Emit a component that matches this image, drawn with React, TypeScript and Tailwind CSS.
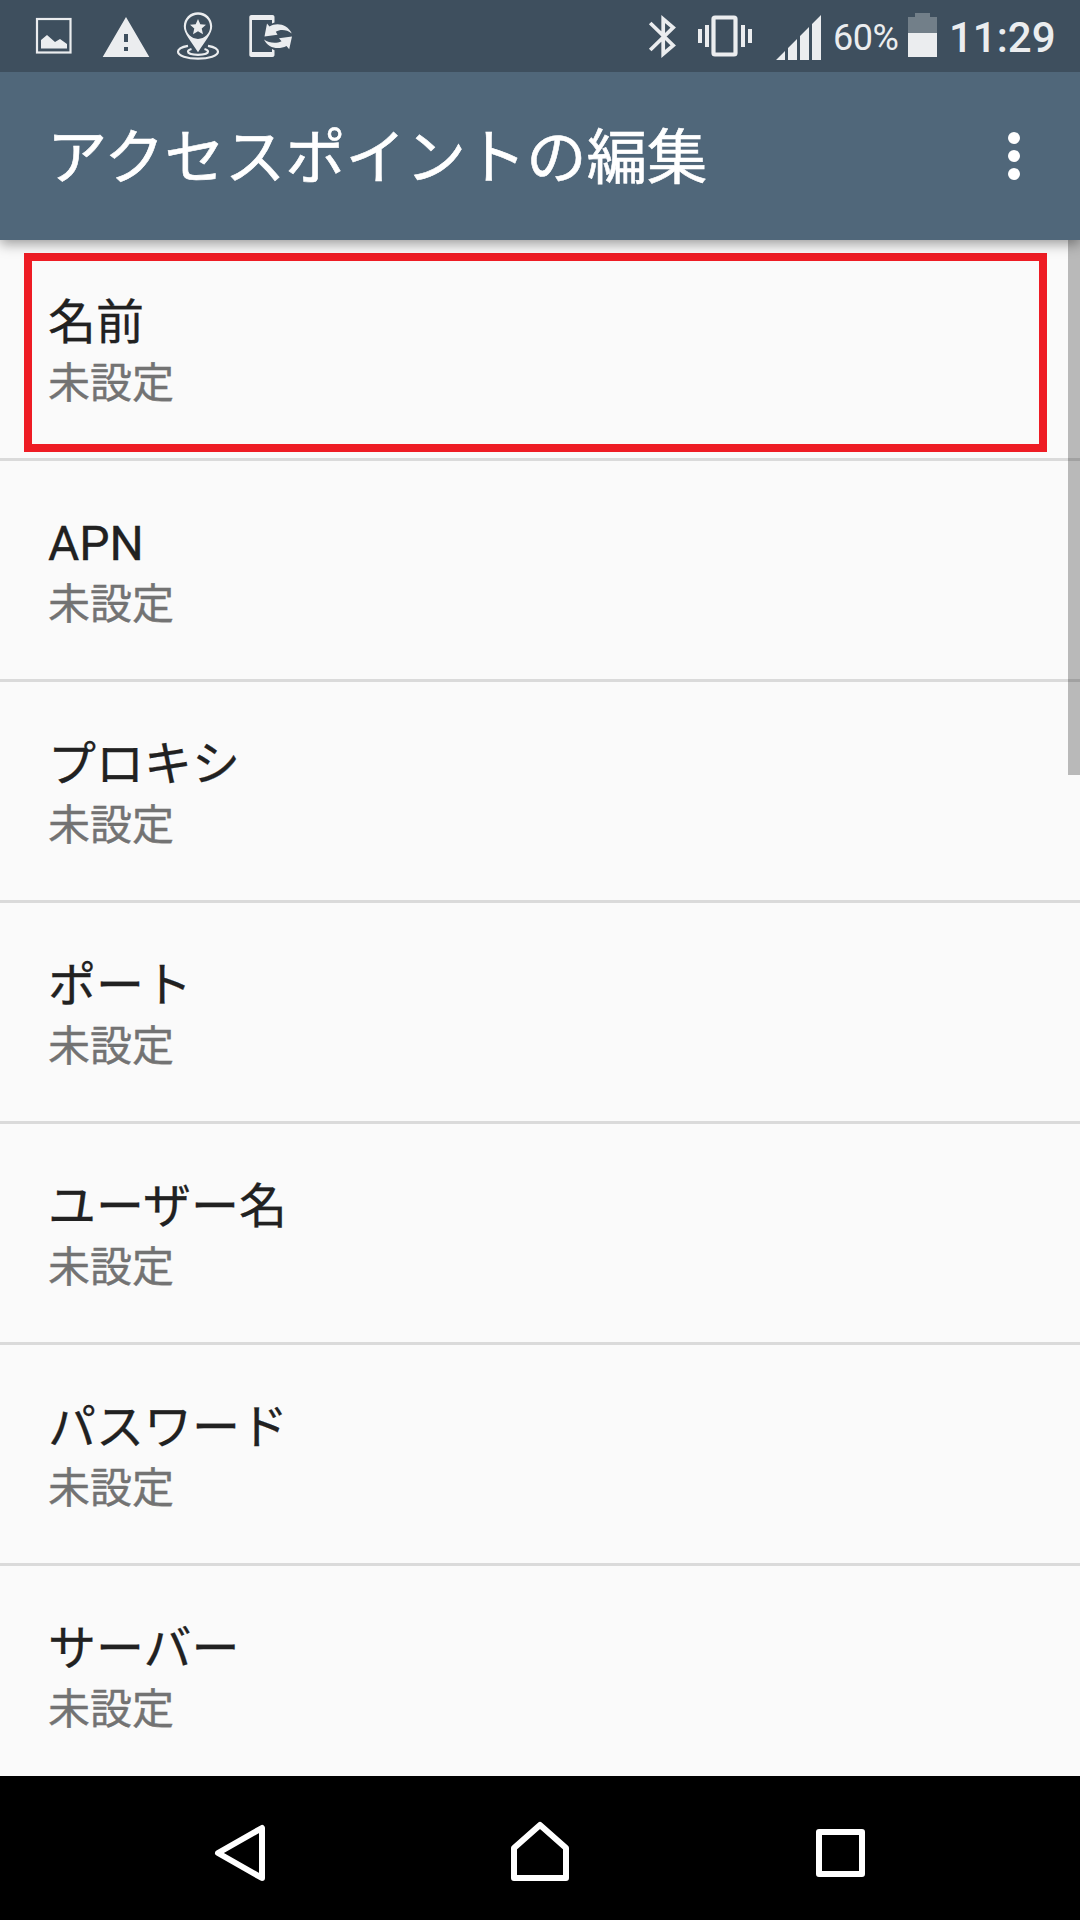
type IconProps = {
  className?: string;
};

type Setting = {
  label: string;
  value: string;
  highlighted?: boolean;
};

const settings: Setting[] = [
  { label: '名前', value: '未設定', highlighted: true },
  { label: 'APN', value: '未設定' },
  { label: 'プロキシ', value: '未設定' },
  { label: 'ポート', value: '未設定' },
  { label: 'ユーザー名', value: '未設定' },
  { label: 'パスワード', value: '未設定' },
  { label: 'サーバー', value: '未設定' },
];

function PictureIcon({ className }: IconProps) {
  return (
    <svg viewBox="0 0 60 72" className={className} fill="currentColor">
      <rect x="13" y="19" width="33.5" height="33.5" fill="none" stroke="currentColor" strokeWidth="2.2" />
      <path d="M17 48.5V40l6-5 8 7 5-3 7 5v4.5z" />
    </svg>
  );
}

function WarningIcon({ className }: IconProps) {
  return (
    <svg viewBox="0 0 60 72" className={className} fill="currentColor">
      <path fillRule="evenodd" d="M30 17l23.3 40H6.7zM28 34v8h4v-8zM28 47v4h4v-4z" />
    </svg>
  );
}

function LocationIcon({ className }: IconProps) {
  return (
    <svg viewBox="0 0 60 72" className={className} fill="none" stroke="currentColor">
      <path strokeWidth="2.2" d="M20 45.8C14 46.8 10 49 10 51.8c0 4 9 6.8 20 6.8s20-2.8 20-6.8c0-2.8-4-5-10-6" />
      <path strokeWidth="2.2" d="M23.5 49c-2 .6-3.5 1.5-3.5 2.6 0 2 4.5 3.2 10 3.2s10-1.2 10-3.2c0-1.1-1.5-2-3.5-2.6" />
      <path
        fill="currentColor"
        stroke="none"
        fillRule="evenodd"
        d="M30 12.3c-8 0-14.2 6.2-14.2 14 0 7.2 7.2 14.7 14.2 26 7-11.3 14.2-18.8 14.2-26 0-7.8-6.2-14-14.2-14zm0 2.4a12 12 0 0 1 0 24.2 12 12 0 0 1 0-24.2z"
      />
      <path fill="currentColor" stroke="none" d="M30 19l2.3 5.2 5.7.6-4.3 3.8 1.3 5.6-5-2.9-5 2.9 1.3-5.6-4.3-3.8 5.7-.6z" />
    </svg>
  );
}

function PhoneSyncIcon({ className }: IconProps) {
  return (
    <svg viewBox="0 0 60 72" className={className} fill="currentColor">
      <path d="M11.5 15h21c1.2 0 2 .8 2 2v5.5l-2.5 1V20H12v32h20v-3l2.5 1.2V55c0 1.2-.8 2-2 2h-21c-1.2 0-2.2-.8-2.2-2V17c0-1.2 1-2 2.2-2z" />
      <path d="M27 23.5l2.5 3c7-4.5 18-2.5 22.3 7-5-4-11.5-4.5-16-1.7l1.7 3L24.5 36.5z" />
      <path d="M52 36.5l-2.8 12.7-2.7-3.2c-8 4-18.5 2.5-22.5-6.5 5 3.5 12 4.5 17.5 1.7L39 38.2z" />
    </svg>
  );
}

function BluetoothIcon({ className }: IconProps) {
  return (
    <svg viewBox="0 0 36 72" className={className} fill="none" stroke="currentColor" strokeWidth="3.7">
      <path d="M5.2 23L28.2 45.5 18.2 54V19L28.2 27.5 5.2 50" />
    </svg>
  );
}

function VibrateIcon({ className }: IconProps) {
  return (
    <svg viewBox="0 0 60 72" className={className} fill="currentColor">
      <rect x="18.5" y="17.5" width="22" height="37" rx="1.5" fill="none" stroke="currentColor" strokeWidth="4.2" />
      <rect x="3" y="29" width="4" height="14" />
      <rect x="10" y="25" width="4" height="22" />
      <rect x="46" y="25" width="4" height="22" />
      <rect x="53" y="29" width="4" height="14" />
    </svg>
  );
}

function SignalIcon({ className }: IconProps) {
  return (
    <svg viewBox="0 0 48 72" className={className} fill="currentColor">
      <path d="M1 60l9-9v9zM13 60V48l9-9v21zM25 60V36l9-9v33zM37 60V24l9-9v45z" />
    </svg>
  );
}

function BatteryIcon({ className }: IconProps) {
  return (
    <svg viewBox="0 0 29 72" className={className} fill="currentColor">
      <path opacity="0.3" d="M0 17h7v-4h15v4h7v16H0z" />
      <rect y="33" width="29" height="24" />
    </svg>
  );
}

function StatusBar() {
  return (
    <div className="relative z-20 flex h-[72px] shrink-0 items-center justify-between bg-[#3e4f5e] px-6 text-[#ebedef]">
      <div className="flex gap-3">
        <PictureIcon className="h-[72px] w-[60px]" />
        <WarningIcon className="h-[72px] w-[60px]" />
        <LocationIcon className="h-[72px] w-[60px]" />
        <PhoneSyncIcon className="h-[72px] w-[60px]" />
      </div>
      <div className="flex items-center">
        <BluetoothIcon className="mr-[14px] h-[72px] w-9" />
        <VibrateIcon className="mr-5 h-[72px] w-[60px]" />
        <SignalIcon className="mr-[10px] h-[72px] w-12" />
        <span className="w-[75px] pt-1 text-[36px] leading-[72px] tracking-[-0.5px]">60%</span>
        <BatteryIcon className="mr-[12px] h-[72px] w-[29px]" />
        <span className="w-[107px] pt-1 text-[42px] leading-[72px] font-medium whitespace-nowrap">11:29</span>
      </div>
    </div>
  );
}

function Toolbar({ title }: { title: string }) {
  return (
    <header className="z-10 flex h-[168px] shrink-0 items-center justify-between bg-[#50677a] pr-[60px] pl-[47px] text-white shadow-[0_4px_12px_rgba(0,0,0,0.38)]">
      <h1 className="pt-[5px] text-[60.3px] leading-[84px] [-webkit-text-stroke:0.6px_currentColor]">{title}</h1>
      <button className="flex flex-col gap-[6px]">
        <span className="size-3 rounded-full bg-white" />
        <span className="size-3 rounded-full bg-white" />
        <span className="size-3 rounded-full bg-white" />
      </button>
    </header>
  );
}

function SettingRow({ setting }: { setting: Setting }) {
  return (
    <li className="relative h-[221px] shrink-0 border-b-[3px] border-[#dadada] pt-[51px] pl-12">
      <div className="text-[48px] leading-[64px] text-[#212121] [-webkit-text-stroke:0.3px_currentColor]">
        {setting.label}
      </div>
      <div className="text-[42px] leading-[58px] text-[#737373] [-webkit-text-stroke:0.4px_currentColor]">
        {setting.value}
      </div>
      {setting.highlighted && (
        <div className="absolute top-[13px] left-6 h-[199px] w-[1023px] border-8 border-[#ee1c24]" />
      )}
    </li>
  );
}

function NavigationBar() {
  return (
    <nav className="flex h-36 shrink-0 items-center justify-center gap-[228px] bg-black">
      <svg viewBox="0 0 72 72" className="size-[72px]" fill="none" stroke="white" strokeWidth="6" strokeLinejoin="round">
        <path d="M58 16v50L14 41z" />
      </svg>
      <svg viewBox="0 0 72 72" className="size-[72px]" fill="none" stroke="white" strokeWidth="6" strokeLinejoin="round">
        <path d="M36 13L10 36v30h52V36z" />
      </svg>
      <svg viewBox="0 0 72 72" className="size-[72px]" fill="none" stroke="white" strokeWidth="6" strokeLinejoin="round">
        <path d="M15 20h43v42H15z" />
      </svg>
    </nav>
  );
}

export default function App() {
  return (
    <div className="flex h-[1920px] w-[1080px] flex-col overflow-hidden bg-[#fafafa] font-[Roboto,'Noto_Sans_CJK_JP',sans-serif]">
      <StatusBar />
      <Toolbar title="アクセスポイントの編集" />
      <main className="relative min-h-0 flex-1 overflow-hidden">
        <ul className="flex flex-col">
          {settings.map((setting) => (
            <SettingRow key={setting.label} setting={setting} />
          ))}
        </ul>
        {/* Scroll indicator */}
        <div className="absolute top-0 right-0 h-[535px] w-3 bg-black/26" />
      </main>
      <NavigationBar />
    </div>
  );
}
